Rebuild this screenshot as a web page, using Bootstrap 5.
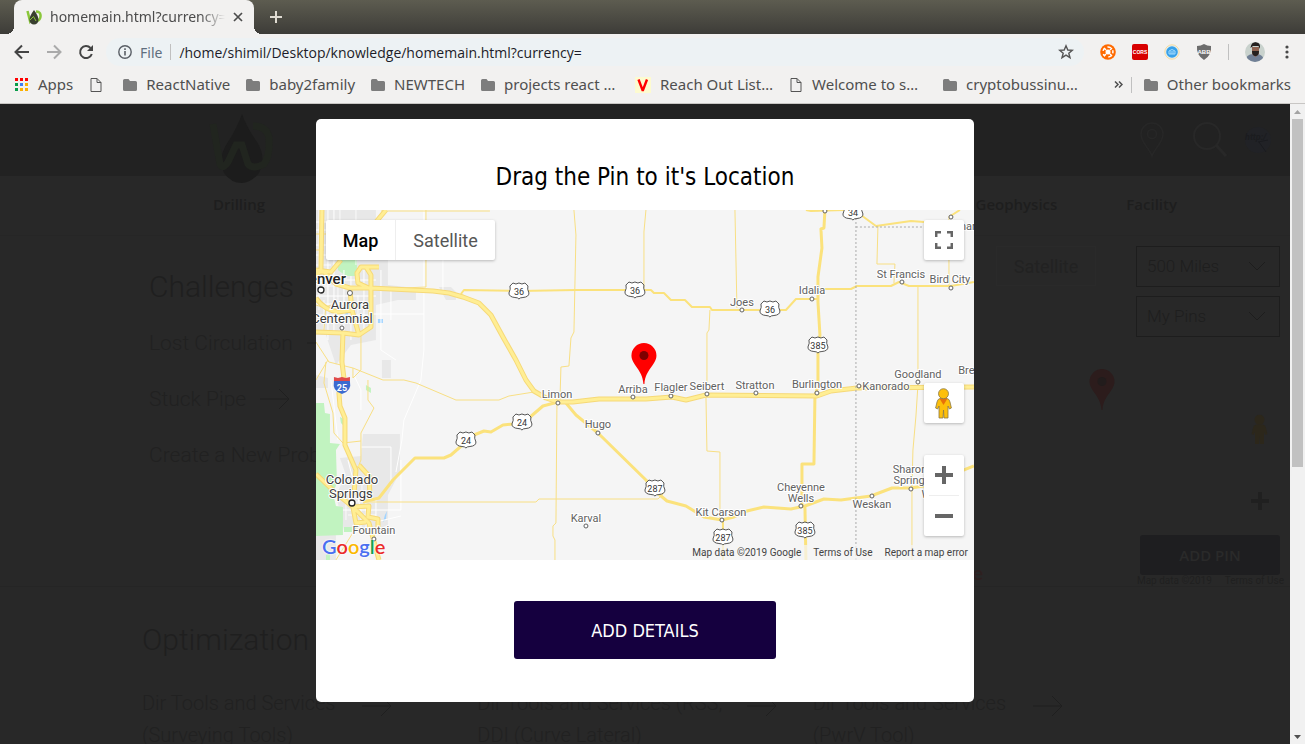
<!DOCTYPE html>
<html lang="en">
<head>
<meta charset="utf-8">
<meta name="viewport" content="width=device-width, initial-scale=1">
<title>homemain.html?currency=</title>
<link href="https://cdn.jsdelivr.net/npm/bootstrap@5.3.0/dist/css/bootstrap.min.css" rel="stylesheet">
<style>
  body { font-family: "Noto Sans", "Open Sans", sans-serif; background: #282828; }
  svg { display: block; flex: none; }
  button { font: inherit; }
  .plain { background: none; border: 0; padding: 0; color: inherit; }

  /* browser window */
  .tabstrip { height: 34px; background: linear-gradient(#5d5c50, #3d3c38); padding-left: 14px; }
  .browser-tab { width: 240px; background: #f2f1f0; border-radius: 8px 8px 0 0; padding: 0 11px 0 12px; color: #4c4c4c; font-size: 14px; position: relative; }
  .browser-tab::before, .browser-tab::after { content: ""; position: absolute; bottom: 0; width: 8px; height: 8px; }
  .browser-tab::before { left: -8px; background: radial-gradient(circle at 0 0, transparent 8px, #f2f1f0 8px); }
  .browser-tab::after { right: -8px; background: radial-gradient(circle at 100% 0, transparent 8px, #f2f1f0 8px); }
  .tab-title { line-height: 24px; flex: 1 1 0; min-width: 0; overflow: hidden; white-space: nowrap; -webkit-mask-image: linear-gradient(90deg, #000 86%, transparent); mask-image: linear-gradient(90deg, #000 86%, transparent); }
  .toolbar { height: 36px; background: #f2f1f0; padding: 0 16px 0 14px; }
  .omnibox { height: 28px; background: #edf2f4; border-radius: 14px; padding: 0 10px 0 12px; font-size: 14px; color: #5f6e7e; }
  .omnibox input { border: 0; background: transparent; outline: 0; color: #1c1c28; padding: 0; min-width: 0; font: 14px "Open Sans", sans-serif; }
  .rule { width: 1px; height: 16px; background: #c0c0c0; }
  .bookmarks { height: 34px; background: #f2f1f0; border-bottom: 1px solid #c8c6c4; padding: 0 14px 4px 15px; font-size: 15px; white-space: nowrap; }
  .bookmark-list { gap: 16px; }
  .bookmarks a { color: #4f4f4f; text-decoration: none; display: flex; align-items: center; gap: 9px; }
  .bookmarks .wide { width: 138px; }

  /* scroll bar */
  .scroller { width: 15px; background: #f1f1f1; }
  .scroller svg { width: 15px; height: 15px; }
  .thumb { background: #c1c1c1; height: 57%; margin: 0 2px; }

  /* page behind the dialog */
  .site { background: #282828; color: #202020; font-family: Roboto, sans-serif; }
  .site a { color: inherit; text-decoration: none; }
  .site-head { height: 72px; background: #222; padding: 0 18px 0 209px; }
  .site-nav { height: 60px; border-bottom: 1px solid #262626; padding: 0 113px 2px 213px; gap: 69px; font-size: 15px; font-family: "Open Sans", sans-serif; font-weight: 600; }
  .site-nav a { color: #1e1e1e; }
  .challenges { padding: 28px 0 0 149px; }
  .site h2 { font-size: 30px; line-height: 46px; font-weight: 300; margin: 0; color: #1f1f1f; }
  .challenges h2 { margin-bottom: 5px; }
  .challenges a { display: flex; gap: 14px; font-size: 21px; font-weight: 300; line-height: 56px; color: #212121; align-items: center; }
  .back-map { width: 376px; height: 350px; position: relative; }
  .back-map .satellite { top: 10px; right: 194px; width: 100px; height: 40px; border: 1px solid #2a2a2a; font-size: 18px; color: #222; }
  .back-picks { top: 10px; right: 10px; width: 144px; gap: 9px; }
  .back-picks select { appearance: none; height: 41px; border: 1px solid #1d1d1d; background: transparent; padding: 0 10px; color: #1e1e1e; font-size: 17px; font-weight: 300; width: 100%; }
  .back-picks label { position: relative; }
  .back-picks svg { position: absolute; right: 14px; top: 15px; }
  .back-pin { left: 175px; top: 133px; }
  .back-peg { right: 22px; top: 178px; }
  .back-plus { right: 21px; top: 256px; }
  .add-pin { right: 10px; bottom: 11px; width: 140px; height: 40px; border: 0; border-radius: 3px; background: #1e1e20; color: #2a2a2a; font-family: "Open Sans", sans-serif; font-weight: 600; font-size: 15px; }
  .back-terms { right: 6px; bottom: 0; gap: 13px; font-size: 10px; line-height: 11px; color: #202020; white-space: nowrap; }
  .back-logo { color: #2e2020; }
  .optim { border-top: 1px solid #252525; padding: 30px 142px 0; }
  .optim .tool { width: 250px; gap: 24px; font-size: 20px; line-height: 32px; font-weight: 300; color: #212121; }
  .optim .tool-wide { width: 300px; }
  .tools { margin-top: 24px; display: grid; grid-template-columns: repeat(3, 1fr); }

  /* dialog */
  .veil { inset: 0; padding-top: 15px; }
  .pin-dialog { width: 51%; min-width: 480px; align-self: flex-start; background: #fff; border-radius: 5px; padding: 40px 0 43px; }
  .pin-dialog h1 { font: 400 24px/36px "DejaVu Sans Condensed", sans-serif; color: #000; margin: 0 0 15px; text-align: center; }
  .map-box { height: 350px; position: relative; background: #f5f5f5; font-family: Roboto, sans-serif; overflow: hidden; }
  .map-box > svg { width: 100%; height: 100%; }
  .map-btn { background: #fff; border: 0; padding: 0; height: 40px; width: 40px; border-radius: 2px; box-shadow: 0 1px 3px rgba(0,0,0,.25); display: flex; align-items: center; justify-content: center; color: #666; }
  .kinds { top: 10px; left: 10px; box-shadow: 0 1px 3px rgba(0,0,0,.25); border-radius: 2px; background: #fff; font-size: 18px; }
  .kinds button { height: 40px; color: #565656; width: 99px; }
  .kinds .on { width: 70px; color: #000; font-weight: 500; border-right: 1px solid #eee; }
  .full { top: 10px; right: 10px; }
  .side { right: 10px; bottom: 24px; gap: 32px; }
  .zoomer { background: #fff; border-radius: 2px; box-shadow: 0 1px 3px rgba(0,0,0,.25); }
  .zoomer button { width: 40px; height: 40px; display: flex; align-items: center; justify-content: center; }
  .zoomer hr { margin: 0 5px; border-color: #bbb; }
  .terms { right: 0; bottom: 0; padding: 0 6px; gap: 12px; font-size: 10px; line-height: 15px; color: #444; background: rgba(245,245,245,.7); }
  .terms a { color: #444; text-decoration: none; }
  .g-logo { left: 6px; bottom: 3px; font: 600 20px/22px Lato, sans-serif; }
  .map-box .g-logo { text-shadow: 0 0 2px #fff, 0 0 2px #fff; }
  .g-blue { color: #4a6ff0; } .g-red { color: #ea2a2a; } .g-gold { color: #fbb800; } .g-green { color: #12a150; }
  .add-details { width: 262px; height: 58px; margin-top: 41px; border: 0; border-radius: 3px; background: #15003f; color: #fff; font: 400 18px "DejaVu Sans Condensed", sans-serif; }

  /* map drawing */
  .hw { fill: none; stroke: #f6d978; stroke-width: 5; stroke-linejoin: round; }
  .hw-in { fill: none; stroke: #ffee94; stroke-width: 3; stroke-linejoin: round; }
  .rd { fill: none; stroke: #fbe27c; stroke-width: 2; stroke-linejoin: round; }
  .rd-main { stroke-width: 3; }
  .ln { fill: none; stroke: #f8df84; stroke-width: 1; }
  .town { font-size: 11px; fill: #616161; text-anchor: middle; stroke: #fff; stroke-width: 2px; paint-order: stroke; }
  .city { font-size: 13px; fill: #3d3d3d; }
  .metro { font-size: 15px; font-weight: 500; fill: #222; text-anchor: end; }
  .dot { fill: #fff; stroke: #606060; stroke-width: 1; }
</style>
</head>
<body>
<svg width="0" height="0" class="position-absolute" aria-hidden="true">
  <symbol id="folder" viewBox="0 0 14 12"><path fill="#7d7d7d" d="M1.500 0H5.500L7 2H12.500Q14 2 14 3.500V10.500Q14 12 12.500 12H1.500Q0 12 0 10.500V1.500Q0 0 1.500 0Z"/></symbol>
  <symbol id="sheet" viewBox="0 0 11 14"><path fill="none" stroke="#555" d="M.5.5H6.500L10.500 4.500V13.500H.5ZM6.500.5V4.500H10.500"/></symbol>
  <symbol id="pin" viewBox="0 0 26 41"><path fill="currentColor" d="M13 0A12.500 12.500 0 0 1 25.500 12.500C25.500 22 14.500 26 13.500 41H12.500C11.500 26 .5 22 .5 12.500A12.500 12.500 0 0 1 13 0Z"/><circle cx="13" cy="12.500" r="4.500" fill="#000" fill-opacity=".5"/></symbol>
  <symbol id="pin-dim" viewBox="0 0 26 41"><path fill="currentColor" d="M13 0A12.500 12.500 0 0 1 25.500 12.500C25.500 22 14.500 26 13.500 41H12.500C11.500 26 .5 22 .5 12.500A12.500 12.500 0 0 1 13 0Z"/><circle cx="13" cy="12.500" r="4.500" fill="#221c1c"/></symbol>
  <symbol id="peg" viewBox="0 0 17 31"><path fill="currentColor" stroke="#8a7a4a" stroke-width=".8" d="M5 10.500Q2.500 11 2 14L.6 20L2.600 21L4 18V30H8L8.500 22L9 30H13V18L14.400 21L16.400 20L15 14Q14.500 11 12 10.500Z"/><path fill="#e8710a" d="M4.500 10.500H12.500L8.500 17Z"/><circle cx="8.500" cy="5.700" r="5" fill="currentColor" stroke="#8a7a4a" stroke-width=".8"/></symbol>
  <symbol id="peg-dim" viewBox="0 0 17 31"><path fill="currentColor" d="M5 10.500Q2.500 11 2 14L.6 20L2.600 21L4 18V30H8L8.500 22L9 30H13V18L14.400 21L16.400 20L15 14Q14.500 11 12 10.500Z"/><circle cx="8.500" cy="5.700" r="5" fill="currentColor"/></symbol>
  <symbol id="arrow" viewBox="0 0 30 22"><path fill="none" stroke="#1f1f1f" d="M0 11H29M19 1L29 11L19 21"/></symbol>
  <symbol id="shield" viewBox="-11 -9 22 18"><path fill="#fff" stroke="#555" d="M-6 -8Q-3 -6 0 -8Q3 -6 6 -8L9 -5Q8 -2 10 2Q10 6 4 6.500Q1 6.500 0 8Q-1 6.500 -4 6.500Q-10 6 -10 2Q-8 -2 -9 -5Z"/></symbol>
</svg>

<div class="d-flex flex-column vh-100 overflow-hidden">
  <header>
    <div class="tabstrip d-flex">
      <div class="browser-tab d-flex align-items-center gap-2">
        <svg width="16" height="16" viewBox="0 0 16 16"><path fill="none" stroke="#8ac73a" stroke-width="2.500" d="M1.500 2L4 12L7.500 6L10.500 12Q15 11 14.500 6Q14 2.500 10 2.500"/><path fill="#39402f" d="M8 1Q12.500 7 12.500 11A4.500 4.500 0 0 1 3.500 11Q3.500 7 8 1Z"/><path fill="none" stroke="#8ac73a" stroke-width="1" d="M4 11L7.500 7.500L10 12"/></svg>
        <span class="tab-title">homemain.html?currency=</span>
        <button class="plain" aria-label="Close tab"><svg width="10" height="10" viewBox="0 0 10 10"><path stroke="#4c4c4c" stroke-width="1.700" d="M1 1L9 9M9 1L1 9"/></svg></button>
      </div>
      <button class="plain ms-3" aria-label="New tab"><svg width="12" height="12" viewBox="0 0 12 12"><path stroke="#dfdbd2" stroke-width="2" d="M6 0V12M0 6H12"/></svg></button>
    </div>
    <div class="toolbar d-flex align-items-center">
      <div class="d-flex align-items-center gap-3 me-2 pe-1">
        <button class="plain" aria-label="Back"><svg width="16" height="16" viewBox="0 0 16 16"><path fill="none" stroke="#444" stroke-width="2" d="M15 8H2M8 1.500L1.500 8L8 14.500"/></svg></button>
        <button class="plain" aria-label="Forward"><svg width="16" height="16" viewBox="0 0 16 16"><path fill="none" stroke="#aaa" stroke-width="2" d="M1 8H14M8 1.500L14.500 8L8 14.500"/></svg></button>
        <button class="plain" aria-label="Reload"><svg width="16" height="16" viewBox="0 0 16 16"><path fill="none" stroke="#444" stroke-width="2" d="M13.800 10A6 6 0 1 1 12.500 4"/><path fill="#444" d="M15 1V7H9Z"/></svg></button>
      </div>
      <div class="omnibox d-flex align-items-center flex-grow-1">
        <svg width="14" height="14" viewBox="0 0 14 14"><circle cx="7" cy="7" r="6.200" fill="none" stroke="#5a5f66" stroke-width="1.400"/><path stroke="#5a5f66" stroke-width="1.600" d="M7 6V10.500M7 3.300V5"/></svg>
        <label for="url" class="ms-2">File</label><span class="rule mx-2"></span>
        <input id="url" class="flex-grow-1" value="/home/shimil/Desktop/knowledge/homemain.html?currency=">
        <button class="plain" aria-label="Bookmark"><svg width="16" height="16" viewBox="0 0 16 16"><path fill="none" stroke="#555" stroke-width="1.400" d="M8 1.800L9.800 6L14.300 6.300L10.800 9.200L12 13.700L8 11.200L4 13.700L5.200 9.200L1.700 6.300L6.200 6Z"/></svg></button>
      </div>
      <div class="d-flex align-items-center gap-3 ms-3">
        <svg width="16" height="16" viewBox="0 0 16 16"><circle cx="8" cy="8" r="7.800" fill="#ff6a00"/><path stroke="#fff" stroke-width="1.500" d="M4 4L6 6M12 4L10 6M4 12L6 10M12 12L10 10"/><path fill="none" stroke="#fff" stroke-width="1.500" stroke-dasharray="3 3" d="M8 3A5 5 0 1 1 7.900 3"/><circle cx="8" cy="8" r="2.500" fill="#fff"/></svg>
        <svg width="16" height="16" viewBox="0 0 16 16"><rect width="16" height="16" rx="2" fill="#d80000"/><text x="8" y="10" text-anchor="middle" font-family="Liberation Sans" font-size="5" font-weight="700" fill="#fff">CORS</text></svg>
        <svg width="16" height="16" viewBox="0 0 16 16"><circle cx="8" cy="8" r="7.200" fill="#e4eef2" stroke="#f8dc9c"/><circle cx="8" cy="8" r="5.800" fill="#38a1e8"/><path d="M5 10V7Q8 4 11 7V10ZM7 7V10M9 7V10" fill="none" stroke="#a6dcff"/></svg>
        <svg width="16" height="16" viewBox="0 0 16 16"><path fill="#6c6c6c" d="M8 0Q11 2 15 2Q16 11 8 16Q0 11 1 2Q5 2 8 0Z"/><text x="8" y="10" text-anchor="middle" font-family="Liberation Sans" font-size="6" font-weight="700" fill="#fff">ABB</text></svg>
        <span class="rule"></span>
        <svg class="ms-n1" width="20" height="20" viewBox="0 0 20 20"><clipPath id="av"><circle cx="10" cy="10" r="10"/></clipPath><g clip-path="url(#av)"><rect width="20" height="20" fill="#c9d2cd"/><path fill="#718096" d="M0 20Q1 11 10 12Q18 11 20 20Z"/><path fill="#8e6250" d="M7 5H14V12L10.500 15L7 12Z"/><path fill="#24201f" d="M5.500 6Q6 0 11 0Q16 1 15 7L13.500 4H8ZM7 9H14Q14 14 10.500 14Q7 14 7 9Z"/></g></svg>
        <button class="plain ps-1" aria-label="Menu"><svg width="4" height="14" viewBox="0 0 4 14" fill="#484848"><circle cx="2" cy="2" r="1.600"/><circle cx="2" cy="7" r="1.600"/><circle cx="2" cy="12" r="1.600"/></svg></button>
      </div>
    </div>
    <nav class="bookmarks d-flex align-items-center">
      <div class="bookmark-list d-flex align-items-center flex-grow-1">
        <a href="#"><svg width="14" height="14" viewBox="0 0 14 14"><path fill="#f00" d="M0 0H3V3H0ZM5 0H8V3H5ZM10 0H13V3H10Z"/><path fill="#0a9d4a" d="M0 5H3V8H0ZM0 10H3V13H0Z"/><path fill="#3f7ef0" d="M5 5H8V8H5Z"/><path fill="#fbb000" d="M10 5H13V8H10ZM5 10H8V13H5ZM10 10H13V13H10Z"/></svg>Apps</a>
        <a href="#" class="me-1" aria-label="Untitled"><svg width="14" height="14"><use href="#sheet"/></svg></a>
        <a href="#"><svg width="14" height="12"><use href="#folder"/></svg>ReactNative</a>
        <a href="#"><svg width="14" height="12"><use href="#folder"/></svg>baby2family</a>
        <a href="#"><svg width="14" height="12"><use href="#folder"/></svg>NEWTECH</a>
        <a href="#" class="wide"><svg width="14" height="12"><use href="#folder"/></svg>projects react …</a>
        <a href="#" class="wide"><svg width="16" height="16" viewBox="0 0 16 16"><rect width="16" height="16" fill="#fdfbd0"/><path fill="none" stroke="#f00" stroke-width="2.400" d="M3.500 2.500L7.500 13H8L12 2.500"/></svg>Reach Out List…</a>
        <a href="#" class="wide"><svg width="14" height="14"><use href="#sheet"/></svg>Welcome to s…</a>
        <a href="#" class="wide"><svg width="14" height="12"><use href="#folder"/></svg>cryptobussinu…</a>
      </div>
      <button class="plain" aria-label="More bookmarks"><svg width="9" height="7" viewBox="0 0 9 7"><path fill="none" stroke="#4f4f4f" stroke-width="1.500" d="M1 .5L4 3.500L1 6.500M5 .5L8 3.500L5 6.500"/></svg></button>
      <span class="rule mx-2"></span>
      <a href="#" class="ms-1"><svg width="14" height="12"><use href="#folder"/></svg>Other bookmarks</a>
    </nav>
  </header>

  <div class="d-flex flex-grow-1 overflow-hidden">
    <div class="position-relative flex-grow-1 overflow-hidden">
      <div class="site h-100 overflow-hidden">
        <div class="site-head d-flex align-items-center">
          <svg class="me-auto align-self-start mt-2" width="64" height="72" viewBox="0 0 64 72"><path fill="#1c1c1c" d="M33 2Q38 16 48 30Q58 46 50 61Q42 71 33 71Q22 71 15 61Q8 46 19 30Q28 16 33 2Z"/><path fill="none" stroke="#21251f" stroke-width="7" d="M4 12L11 52Q14 58 19 50L27 33H33L39 52Q44 58 55 52Q61 44 60 26Q58 14 44 14"/></svg>
          <svg width="24" height="36" viewBox="0 0 24 36"><path fill="none" stroke="#272727" stroke-width="1.500" d="M12 34C10 27 1 21 1 12A11 11 0 0 1 23 12C23 21 14 27 12 34Z"/><circle cx="12" cy="12" r="4.500" fill="none" stroke="#272727" stroke-width="1.500"/></svg>
          <svg class="ms-4 me-3" width="40" height="36" viewBox="0 0 40 36"><circle cx="19" cy="14" r="13" fill="none" stroke="#282828" stroke-width="2"/><path stroke="#282828" stroke-width="3" d="M28 23L38 34"/></svg>
          <svg width="28" height="28" viewBox="0 0 28 28"><circle cx="14" cy="14" r="13" fill="#212226"/><text x="1" y="14" font-size="9" font-style="italic" font-weight="700" fill="#1b1c1f">http:/</text><path d="M14 16L24 14M15 16L22 26" stroke="#1a1b1f"/></svg>
        </div>
        <nav class="site-nav d-flex align-items-center"><a href="#" class="me-auto">Drilling</a><a href="#">Geology &amp; Geophysics</a><a href="#">Facility</a></nav>
        <div class="d-flex justify-content-between">
          <div class="challenges">
            <h2>Challenges</h2>
            <a href="#">Lost Circulation <svg width="30" height="22"><use href="#arrow"/></svg></a>
            <a href="#">Stuck Pipe <svg width="30" height="22"><use href="#arrow"/></svg></a>
            <a href="#">Create a New Problem <svg width="30" height="22"><use href="#arrow"/></svg></a>
          </div>
          <div class="back-map">
            <button class="plain satellite position-absolute">Satellite</button>
            <div class="back-picks position-absolute d-flex flex-column">
              <label><select aria-label="Distance"><option>500 Miles</option></select><svg width="18" height="10" viewBox="0 0 18 10"><path fill="none" stroke="#1d1d1d" d="M1 1L9 9L17 1"/></svg></label>
              <label><select aria-label="Pins"><option>My Pins</option></select><svg width="18" height="10" viewBox="0 0 18 10"><path fill="none" stroke="#1d1d1d" d="M1 1L9 9L17 1"/></svg></label>
            </div>
            <svg class="back-pin position-absolute" width="26" height="41" color="#2c1c1c"><use href="#pin-dim"/></svg>
            <svg class="back-peg position-absolute" width="17" height="31" color="#2c271b"><use href="#peg-dim"/></svg>
            <svg class="back-plus position-absolute" width="18" height="18" viewBox="0 0 18 18"><path stroke="#202020" stroke-width="4" d="M9 0V18M0 9H18"/></svg>
            <button class="add-pin position-absolute">ADD PIN</button>
            <div class="back-terms position-absolute d-flex"><span>Map data ©2019</span><a href="#">Terms of Use</a></div>
            <div class="g-logo back-logo position-absolute">Google</div>
          </div>
        </div>
        <div class="optim">
          <h2>Optimization</h2>
          <div class="tools">
            <a href="#" class="tool d-flex"><span>Dir Tools and Services (Surveying Tools)</span><svg class="mt-2" width="30" height="22"><use href="#arrow"/></svg></a>
            <a href="#" class="tool tool-wide d-flex"><span>Dir Tools and Services (RSS, DDI (Curve Lateral)</span><svg class="mt-2" width="30" height="22"><use href="#arrow"/></svg></a>
            <a href="#" class="tool d-flex"><span>Dir Tools and Services (PwrV Tool)</span><svg class="mt-2" width="30" height="22"><use href="#arrow"/></svg></a>
          </div>
        </div>
      </div>

      <div class="veil position-absolute d-flex justify-content-center">
        <div class="pin-dialog" role="dialog" aria-labelledby="dlg">
          <h1 id="dlg">Drag the Pin to it's Location</h1>
          <div class="map-box">
            <svg viewBox="0 0 658 350" preserveAspectRatio="xMidYMid slice" aria-label="Map of eastern Colorado">
              <path fill="#e8e8e8" d="M0 0H60V20L72 50V75L100 78V90H82L60 95V130L35 135L20 155L10 125H0ZM47 224H84V262L72 285V315L60 320H28L20 285L30 265L24 248L45 246ZM0 310L20 320V350H0ZM66 150H75V168H66ZM123 77H135L140 82V90H130ZM0 165L12 168V178H0Z"/>
              <path fill="#c1f3c0" d="M0 193H8L9 203L14 204V233L24 234L20 240L21 273L17 283L20 296L27 297V325L0 326ZM22 48H41V66H30L22 60ZM28 317H36V322H28ZM24 207L28 209V216L25 213ZM50 175L55 178V183L50 180ZM10 345L14 343V350H10Z"/>
              <path fill="#a3d4ff" d="M62 109H67V113H62ZM27 105L32 102V106L28 108ZM69 305L71 301L70 309L67 312Z"/>
              <path fill="none" stroke="#fff" d="M0 12H60M0 20H22M0 35H24M0 45H20M0 70H60M0 86H60M0 94H55M0 105H54M12 0V130M18 0V125M28 60V135M35 66V130M48 60V120M65 60V140L80 150M56 104H108V0M108 104V140L105 170L88 210L86 230L80 262M45 237H75V275M27 300H85V250M32 250L45 300V320M60 290V312L85 306M38 165L45 180V200M15 170L22 230M75 78V110M127 25V80"/>
              <path fill="none" stroke="#fff" stroke-opacity=".8" d="M3 0V100M24 0V48M40 0V55M0 55H15M6 76H50M8 90V122M22 70V110M42 85V120M30 285V310M36 288V300M46 268V290M50 290V318M28 292H60M32 305H60"/>
              <path class="ln" d="M65 1H174M110 0V77L88 78L54 80M258 0L260 25L258 122L255 128L253 156L245 157L244 190M241 193L240 313L237 316V326L239 330V350M330 0L328 22V80M419 0L421 98M562 16L561 54H579L578 73M602 76V175L600 206L597 240L596 278V350M633 7V77M47 292H220L223 289H342L348 283M37 158L67 170H88L100 173L140 190H183L193 186L218 182M0 132L13 152L37 158V168L45 160V125M10 152L8 173L17 203L18 223L27 233L45 231M52 170V190L58 198L45 223V250L43 255M43 313L20 350M0 170L12 150M10 95L8 120M0 95Q10 100 20 92M0 24H30M0 40H8M394 100L393 120L391 123V175M390 186L391 241L404 242V310"/>
              <path class="rd" d="M145 84L148 80L203 81L260 80H335L338 83H348L355 90H369L376 97H394L396 100H470L480 89H502M502 79H535L541 76H575L583 72L593 76H635L658 72M490 0L495 1L528 0M545 5L560 16L595 11L608 12M633 7L644 0M407 310V350"/>
              <path class="rd rd-main" d="M509 0L508 18L505 19L506 38L502 67V92L504 125L502 142V176L499 186L498 254H486V296L489 297L490 350M242 192L227 196L213 208L197 214L187 215L175 222L168 221L158 225L135 245L128 248H99L77 270L63 288L47 292M250 193L260 205L282 223L330 270L338 280L351 291L370 296L388 307L406 310L418 307L431 301L448 297L475 299L489 296L508 289L525 290L555 286L576 278H595L608 276L658 256"/>
              <path class="hw" d="M0 62H8L20 74L34 78H54L117 81L133 83L147 87L163 93L175 105L187 127L200 150L210 170L218 181L230 188L242 192H257L283 189H330L356 187L370 190L390 185L501 186L515 181L541 178L658 177M6 0L5 60L0 66M70 0L60 12M63 57H45L41 63L42 73L55 79M50 57L55 65V117L43 125L27 123L0 122M27 123L26 152L28 168L23 183L24 196L29 208V235L40 260L38 285M0 88Q8 100 22 102L36 100L43 125M34 80L36 100M0 60L15 62L25 50M0 264L20 283L37 297L53 313L63 350M43 255L53 266L54 285M37 297L53 296L52 307L62 309V320M37 297L40 313L50 312"/>
              <path class="hw-in" d="M0 62H8L20 74L34 78H54L117 81L133 83L147 87L163 93L175 105L187 127L200 150L210 170L218 181L230 188L242 192H257L283 189H330L356 187L370 190L390 185L501 186L515 181L541 178L658 177M6 0L5 60L0 66M70 0L60 12M63 57H45L41 63L42 73L55 79M50 57L55 65V117L43 125L27 123L0 122M27 123L26 152L28 168L23 183L24 196L29 208V235L40 260L38 285M0 88Q8 100 22 102L36 100L43 125M34 80L36 100M0 60L15 62L25 50M0 264L20 283L37 297L53 313L63 350M43 255L53 266L54 285M37 297L53 296L52 307L62 309V320M37 297L40 313L50 312"/>
              <path fill="none" stroke="#aaa" stroke-dasharray="2 2" d="M540 8V350M540 17H658"/>
              <g class="dot"><circle cx="34" cy="83" r="2.500"/><circle cx="26" cy="118" r="2"/><circle cx="242" cy="193" r="2"/><circle cx="282" cy="223" r="2"/><circle cx="270" cy="316" r="2"/><circle cx="317" cy="187" r="2"/><circle cx="355" cy="186" r="2"/><circle cx="391" cy="184" r="2"/><circle cx="440" cy="183" r="2"/><circle cx="501" cy="183" r="2"/><circle cx="543" cy="176" r="2"/><circle cx="602" cy="172" r="2"/><circle cx="426" cy="100" r="2"/><circle cx="496" cy="89" r="2"/><circle cx="586" cy="72" r="2"/><circle cx="635" cy="78" r="2"/><circle cx="509" cy="1" r="2"/><circle cx="635" cy="7" r="2"/><circle cx="58" cy="329" r="2"/><circle cx="406" cy="310" r="2"/><circle cx="485" cy="296" r="2"/><circle cx="556" cy="286" r="2"/><circle cx="595" cy="279" r="2"/>
                <g stroke="#222" stroke-width="1.300"><circle cx="5" cy="80" r="3"/><circle cx="36" cy="293" r="3"/></g></g>
              <g class="town">
                <text x="426" y="96">Joes</text><text x="496" y="84">Idalia</text><text x="585" y="68">St Francis</text><text x="634" y="73">Bird City</text><text x="602" y="168">Goodland</text><text x="664" y="164">Brewster</text><text x="570" y="180">Kanorado</text><text x="501" y="178">Burlington</text><text x="439" y="179">Stratton</text><text x="391" y="180">Seibert</text><text x="355" y="181">Flagler</text><text x="317" y="183">Arriba</text><text x="241" y="188">Limon</text><text x="282" y="218">Hugo</text><text x="270" y="312">Karval</text><text x="405" y="306">Kit Carson</text><text x="485" y="281">Cheyenne</text><text x="485" y="292">Wells</text><text x="556" y="298">Weskan</text><text x="594" y="263">Sharon</text><text x="596" y="274">Springs</text><text x="616" y="288">Wall</text><text x="58" y="324">Fountain</text><text x="652" y="20">nar</text>
                <g class="city"><text x="34" y="99">Aurora</text><text x="26" y="113">Centennial</text><text x="36" y="274">Colorado</text><text x="35" y="288">Springs</text></g>
                <text class="metro" x="30" y="74">Denver</text>
              </g>
              <g font-size="9" fill="#333" text-anchor="middle">
                <use href="#shield" x="192" y="72" width="22" height="18"/><text x="203" y="85">36</text>
                <use href="#shield" x="308" y="71" width="22" height="18"/><text x="319" y="84">36</text>
                <use href="#shield" x="443" y="90" width="22" height="18"/><text x="454" y="103">36</text>
                <use href="#shield" x="526" y="-7" width="22" height="18"/><text x="537" y="6">34</text>
                <use href="#shield" x="491" y="126" width="22" height="18"/><text x="502" y="139">385</text>
                <use href="#shield" x="195" y="203" width="22" height="18"/><text x="206" y="216">24</text>
                <use href="#shield" x="139" y="221" width="22" height="18"/><text x="150" y="234">24</text>
                <use href="#shield" x="328" y="269" width="22" height="18"/><text x="339" y="282">287</text>
                <use href="#shield" x="396" y="318" width="22" height="18"/><text x="407" y="331">287</text>
                <use href="#shield" x="478" y="311" width="22" height="18"/><text x="489" y="324">385</text>
                <path fill="#3d6bd0" d="M18 171H34Q36 181 26 184Q16 181 18 171Z"/><path fill="#e04a4a" d="M18 167L22 168L26 167L30 168L34 167V171H18Z"/><text x="26" y="181" fill="#fff" font-weight="700">25</text>
              </g>
              <svg x="315" y="133" width="26" height="41" color="#f00"><use href="#pin"/></svg>
            </svg>
            <div class="kinds position-absolute d-flex"><button class="plain on">Map</button><button class="plain">Satellite</button></div>
            <button class="map-btn full position-absolute" aria-label="Full screen"><svg width="18" height="18" viewBox="0 0 18 18"><path fill="none" stroke="#666" stroke-width="2.500" d="M1.200 6V1.200H6M12 1.200H16.800V6M16.800 12V16.800H12M6 16.800H1.200V12"/></svg></button>
            <div class="side position-absolute d-flex flex-column">
              <button class="map-btn" aria-label="Street View"><svg width="17" height="31" color="#fdbf0b"><use href="#peg"/></svg></button>
              <div class="zoomer">
                <button class="plain" aria-label="Zoom in"><svg width="18" height="18" viewBox="0 0 18 18"><path stroke="#666" stroke-width="4" d="M9 0V18M0 9H18"/></svg></button><hr>
                <button class="plain" aria-label="Zoom out"><svg width="18" height="18" viewBox="0 0 18 18"><path stroke="#666" stroke-width="4" d="M0 9H18"/></svg></button>
              </div>
            </div>
            <div class="g-logo position-absolute"><span class="g-blue">G</span><span class="g-red">o</span><span class="g-gold">o</span><span class="g-blue">g</span><span class="g-green">l</span><span class="g-red">e</span></div>
            <div class="terms position-absolute d-flex"><span>Map data ©2019 Google</span><a href="#">Terms of Use</a><a href="#">Report a map error</a></div>
          </div>
          <div class="text-center"><button class="add-details">ADD DETAILS</button></div>
        </div>
      </div>
    </div>
    <div class="scroller d-flex flex-column flex-shrink-0">
      <svg viewBox="0 0 15 15"><path fill="#a3a3a3" d="M4 10L7.500 6L11 10Z"/></svg>
      <div class="flex-grow-1"><div class="thumb"></div></div>
      <svg viewBox="0 0 15 15"><path fill="#505050" d="M4 6L7.500 10L11 6Z"/></svg>
    </div>
  </div>
</div>
<script src="https://cdn.jsdelivr.net/npm/bootstrap@5.3.0/dist/js/bootstrap.bundle.min.js"></script>
</body>
</html>
